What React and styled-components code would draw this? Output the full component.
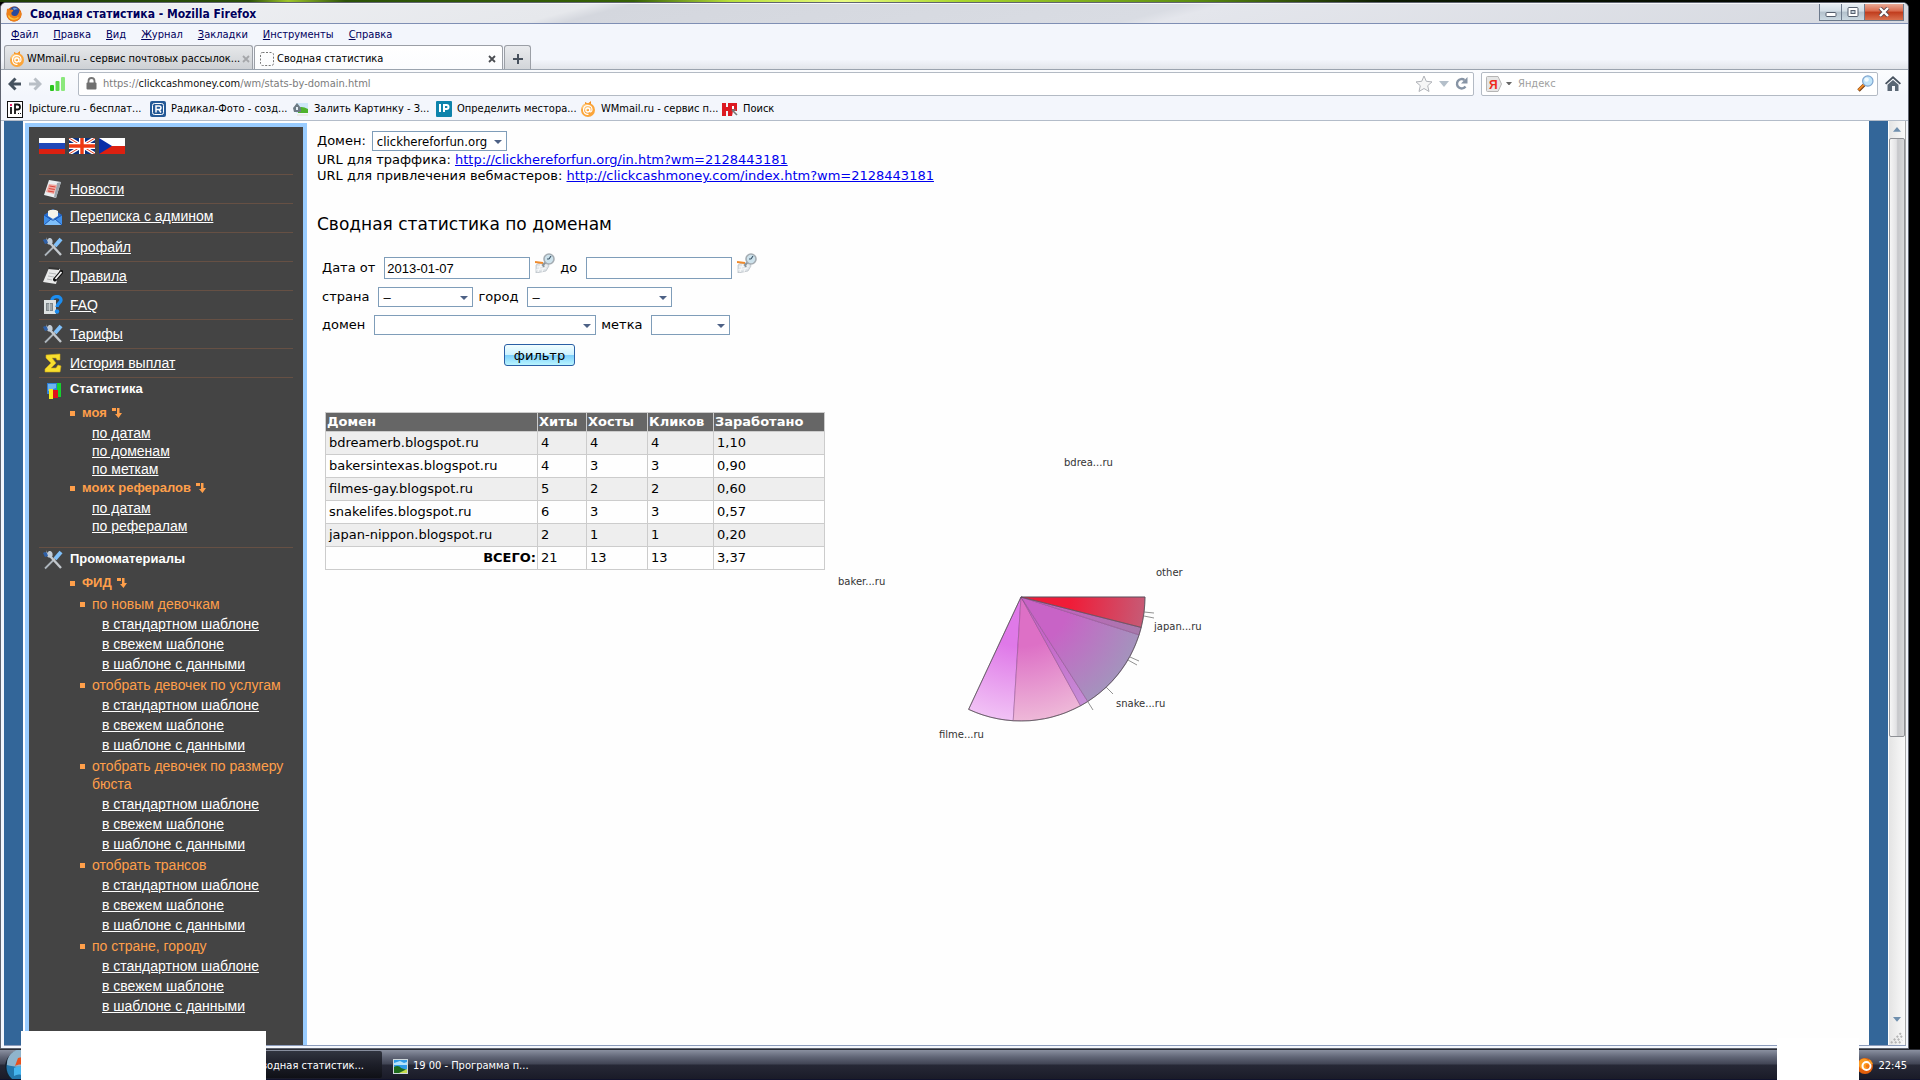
import { Fragment } from "react";
import styled, { createGlobalStyle, css } from "styled-components";

const GlobalStyle = createGlobalStyle`
    * {
        box-sizing: border-box;
    }
    body {
        margin: 0;
        background-color: black;
        font-family: "DejaVu Sans", Verdana, sans-serif;
        font-size: 13px;
    }
    input, select, button {
        margin: 0;
        font-family: inherit;
    }
    svg {
        display: block;
        flex: none;
    }
`;

const chromeFont = css`
    font-family: "DejaVu Sans Condensed", Tahoma, sans-serif;
    font-size: 11px;
    line-height: 16px;
`;

const Desktop = styled.div`
    min-height: 100vh;
    display: flex;
    flex-direction: column;
    position: relative;
    overflow: hidden;
`;

const Wallpaper = styled.div`
    height: 2px;
    background: linear-gradient(
        to right,
        #1d3c05 0%,
        #2c5207 13%,
        #9fc62a 15%,
        #2c5207 18%,
        #356004 33%,
        #b8df3a 38%,
        #e8fb80 44%,
        #a9d62d 50%,
        #5c8e10 62%,
        #0c1a02 72%,
        #000 100%
    );
`;

/* window */

const Window = styled.div`
    flex: 1;
    display: flex;
    flex-direction: column;
    margin-right: 11px;
    border: 1px solid #5f6470;
    border-radius: 6px 6px 0 0;
    background-color: #f3f6fc;
    overflow: hidden;
`;

const TitleBar = styled.header`
    height: 21px;
    display: flex;
    align-items: center;
    padding-left: 5px;
    border-bottom: 1px solid #7f8fb4;
    border-top: 1px solid #f6f7f9;
    background: linear-gradient(
        165deg,
        #f0f1f4 0%,
        #e6e8ec 30%,
        #d4d7de 32%,
        #d9dce3 60%,
        #e4e6ec 62%,
        #d6d9e0 100%
    );
`;

const WindowTitle = styled.h1`
    flex: 1;
    margin: 0 0 0 8px;
    padding-top: 1px;
    font-family: "DejaVu Sans Condensed", Tahoma, sans-serif;
    font-size: 12px;
    line-height: 18px;
    font-weight: bold;
    color: #00005c;
    text-shadow: 0 0 3px white;
`;

const WindowButtons = styled.div`
    display: flex;
    align-self: flex-start;
    margin-right: 4px;
`;

const WindowButton = styled.button`
    width: ${(props) => (props.$close ? "39px" : "23px")};
    height: 17px;
    padding: 0;
    display: flex;
    align-items: center;
    justify-content: center;
    border: 1px solid #6d7a8c;
    border-top: 0;
    border-left-width: ${(props) => (props.$first ? "1px" : "0")};
    background: ${(props) =>
        props.$close
            ? "linear-gradient(#e9a995, #d9694c 45%, #c03b1c 50%, #d9704e)"
            : "linear-gradient(#e6edf2, #d2dde5 45%, #b3c1cc 50%, #cbd9e2)"};
`;

const MenuBar = styled.nav`
    ${chromeFont}
    height: 21px;
    display: flex;
    align-items: center;
    gap: 15px;
    padding-left: 10px;
    a {
        color: #00005c;
        text-decoration: none;
    }
`;

const TabStrip = styled.div`
    ${chromeFont}
    height: 25px;
    display: flex;
    padding-left: 3px;
    border-bottom: 1px solid #9aa3ae;
    background: linear-gradient(#f3f6fc 60%, #e2e5ea);
`;

const Tab = styled.div`
    width: 249px;
    margin-right: 1px;
    padding: 2px 6px 0 4px;
    display: flex;
    align-items: center;
    gap: 2px;
    border: 1px solid #9b9fa6;
    border-bottom: 0;
    border-radius: 3px 3px 0 0;
    background: ${(props) =>
        props.$active
            ? "linear-gradient(#ffffff, #fbfcfe)"
            : "linear-gradient(#e6e8ea, #ced1d5)"};
    white-space: nowrap;
`;

const TabTitle = styled.span`
    flex: 1;
`;

const IconButton = styled.button`
    padding: 0;
    border: 0;
    background: none;
    display: flex;
    align-items: center;
    justify-content: center;
`;

const NewTab = styled(IconButton)`
    width: 27px;
    padding-top: 2px;
    border: 1px solid #9b9fa6;
    border-bottom: 0;
    border-radius: 3px 3px 0 0;
    background: linear-gradient(#e9ebee, #d2d5d9);
`;

const NavBar = styled.div`
    ${chromeFont}
    height: 26px;
    display: flex;
    align-items: center;
    padding: 1px 7px 0 7px;
    gap: 7px;
    background: linear-gradient(#fbfcfe, #f3f6fc);
`;

const NavButtons = styled.div`
    width: 63px;
    display: flex;
    align-items: center;
    gap: 8px;
`;

const Field = styled.div`
    height: 24px;
    display: flex;
    align-items: center;
    border: 1px solid #b3bac4;
    border-radius: 2px;
    background-color: white;
`;

const UrlField = styled(Field)`
    flex: 1;
    padding: 0 5px 0 7px;
    gap: 6px;
`;

const Url = styled.div`
    flex: 1;
    color: #7b7b7b;
    span {
        color: #111;
    }
`;

const SearchField = styled(Field)`
    width: 397px;
    padding: 0 3px 0 4px;
    gap: 4px;
    input {
        flex: 1;
        min-width: 0;
        border: 0;
        padding: 0 0 0 2px;
        outline: 0;
        background: none;
        ${chromeFont}
    }
    input::placeholder {
        color: #a0a0a0;
        opacity: 1;
    }
`;

const BookmarkBar = styled.nav`
    ${chromeFont}
    height: 25px;
    display: flex;
    align-items: center;
    padding: 2px 0 0 6px;
    border-bottom: 1px solid #b3bcc9;
    white-space: nowrap;
`;

const Bookmark = styled.a`
    width: ${(props) => props.$width || 143}px;
    display: flex;
    align-items: center;
    gap: 5px;
    color: black;
    text-decoration: none;
`;

/* page */

const Viewport = styled.div`
    flex: 1;
    display: flex;
    margin: 0 2px 2px 3px;
    border-bottom: 1px solid #8c9cbc;
    background-color: #fefefe;
`;

const SideBand = styled.div`
    width: 19px;
    background-color: #336699;
`;

const Sidebar = styled.aside`
    width: 282px;
    margin: 2px 0 0 2px;
    padding: 11px 10px 0 10px;
    border: 4px solid #99ccff;
    border-bottom: 0;
    background-color: #444;
    font-family: "Liberation Sans", Arial, sans-serif;
    font-size: 14px;
    line-height: 18px;
    color: white;
    a {
        color: white;
    }
`;

const Flags = styled.div`
    height: 36px;
    display: flex;
    gap: 4px;
`;

const NavList = styled.ul`
    list-style: none;
    margin: 0;
    padding: 0;
`;

const NavItem = styled.li`
    height: 29px;
    display: flex;
    align-items: ${(props) => (props.$raised ? "flex-start" : "center")};
    gap: 7px;
    padding: ${(props) => (props.$raised ? "3px" : "0")} 0 0 4px;
    border-top: 1px solid #665044;
`;

const Section = styled.section`
    padding: 2px 0 11px;
    border-top: 1px solid #665044;
`;

const SectionHead = styled.h2`
    height: 24px;
    display: flex;
    gap: 7px;
    margin: 0;
    padding-left: 4px;
    font-size: 13px;
    line-height: 18px;
`;

const Branch = styled.div`
    margin-left: 31px;
`;

const bullet = css`
    display: flex;
    gap: 7px;
    margin: 0;
    color: #ff9f4a;
    &::before {
        content: "";
        flex: none;
        width: 5px;
        height: 5px;
        margin-top: 7px;
        background-color: #ff9f4a;
    }
`;

const BranchTitle = styled.h3`
    ${bullet}
    height: 19px;
    font-size: 13px;
    line-height: 18px;
    align-items: flex-start;
    svg {
        margin: 4px 0 0 -2px;
    }
`;

const LinkList = styled.ul`
    list-style: none;
    margin: 0;
    padding: 1px 0 1px 22px;
`;

const Template = styled.div`
    margin: 2px -6px 0 10px;
`;

const TemplateTitle = styled.p`
    ${bullet}
`;

const TemplateLinks = styled.ul`
    list-style: none;
    margin: 0;
    padding: 1px 0 0 22px;
    line-height: 20px;
`;

const Main = styled.main`
    flex: 1;
    padding: 10px 10px 0;
    line-height: 16px;
    a {
        color: #0000ee;
    }
`;

const DomainRow = styled.div`
    height: 21px;
    display: flex;
    align-items: flex-start;
    gap: 6px;
    label {
        line-height: 20px;
    }
`;

const UrlLine = styled.p`
    margin: 0;
`;

const PageTitle = styled.h2`
    margin: 28px 0 21px;
    font-size: 17px;
    line-height: 24px;
    font-weight: normal;
`;

const Filter = styled.form`
    margin-left: 5px;
    display: flex;
    flex-direction: column;
    align-items: flex-start;
    gap: 8px;
`;

const FilterRow = styled.div`
    display: flex;
    align-items: center;
    gap: 5px;
    label {
        margin-right: 4px;
    }
`;

const control = css`
    border: 1px solid #7f9db9;
    border-radius: 0;
    background-color: white;
    color: black;
    font-family: "Liberation Sans", Arial, sans-serif;
    font-size: 13px;
`;

const DateInput = styled.input`
    ${control}
    width: 146px;
    height: 22px;
    padding: 0 2px;
`;

const CalendarButton = styled(IconButton)`
    align-self: flex-start;
    margin-top: -4px;
`;

const SelectBox = styled.span`
    position: relative;
    display: inline-block;
    width: ${(props) => props.$width}px;
    height: 20px;
    select {
        ${control}
        ${(props) =>
            props.$wide &&
            css`
                font-family: "DejaVu Sans Condensed", Tahoma, sans-serif;
            `}
        appearance: none;
        display: block;
        width: 100%;
        height: 100%;
        padding: 0 4px;
    }
    &::after {
        content: "";
        position: absolute;
        right: 5px;
        top: 9px;
        border: 4px solid transparent;
        border-top-color: #4d6185;
        border-bottom: 0;
        pointer-events: none;
    }
`;

const FilterButton = styled.button`
    width: 71px;
    height: 22px;
    margin: 1px 0 0 182px;
    padding: 0;
    border: 1px solid #2a5fa5;
    border-radius: 3px;
    background: linear-gradient(#f2fdff, #cdf3ff 48%, #7fd0fb 52%, #b9f5ff);
    color: black;
    font-size: 13px;
`;

const Report = styled.div`
    display: flex;
    align-items: flex-start;
    gap: 5px;
    margin: 46px 0 0 8px;
`;

const StatsTable = styled.table`
    width: 500px;
    table-layout: fixed;
    border-collapse: collapse;
    th,
    td {
        border: 1px solid #ccc;
        text-align: left;
    }
    th {
        height: 19px;
        padding: 0 1px;
        background-color: #666;
        color: white;
        line-height: 16px;
    }
    td {
        height: 23px;
        padding: 0 3px;
    }
    tbody tr:nth-child(odd) td {
        background-color: #eee;
    }
    tfoot th {
        height: 23px;
        background: none;
        color: black;
        text-align: right;
    }
`;

const PieLabel = styled.text`
    font-family: "DejaVu Sans", Verdana, sans-serif;
    font-size: 10px;
    fill: #333;
`;

const ScrollBar = styled.div`
    width: 17px;
    margin-left: 1px;
    display: flex;
    flex-direction: column;
    background: linear-gradient(to right, #e4e4e4, #fafafa);
    border-right: 1px solid #aaa;
`;

const ScrollButton = styled(IconButton)`
    height: 17px;
`;

const ScrollThumb = styled.div`
    flex: 600;
    border: 1px solid #8e9095;
    border-radius: 2px;
    background: linear-gradient(to right, #f6f6f6, #e2e2e4 45%, #c6c7ca 55%, #d8d8da);
`;

const ScrollTrack = styled.div`
    flex: 276;
`;

/* taskbar */

const TaskBar = styled.footer`
    ${chromeFont}
    height: 31px;
    display: flex;
    align-items: center;
    border-top: 1px solid #2b2d35;
    border-bottom: 1px solid #10122c;
    background: linear-gradient(#8a90a0 0%, #5f6475 25%, #414555 48%, #262836 52%, #1a1b28 100%);
    color: white;
`;

const Task = styled.button`
    ${chromeFont}
    height: 27px;
    padding: 3px 0 0 11px;
    display: flex;
    align-items: center;
    gap: 5px;
    border: 0;
    border-radius: 2px;
    background: ${(props) =>
        props.$active ? "linear-gradient(#31343f, #1d1f29 48%, #0f1016)" : "none"};
    color: white;
    ${(props) =>
        props.$active &&
        css`
            width: 156px;
            padding: 3px 18px 0 0;
            margin-left: 190px;
            justify-content: flex-end;
        `}
`;

const Tray = styled.div`
    flex: 1;
    display: flex;
    align-items: center;
    justify-content: flex-end;
    gap: 5px;
    padding: 2px 13px 0 0;
`;

const Patch = styled.div`
    position: absolute;
    bottom: 0;
    background-color: white;
    ${(props) =>
        props.$left
            ? "left: 21px; width: 245px; height: 49px;"
            : "right: 61px; width: 82px; height: 42px;"}
`;

/* icons */

const FirefoxIcon = () => (
    <svg width="16" height="16" viewBox="0 0 16 16">
        <circle cx="8" cy="8" r="7.6" fill="#d9640f" />
        <circle cx="8.6" cy="5.6" r="5" fill="#2a4a9c" />
        <path d="M1 3c1.200-.6 2.200 0 3 1 1.300-.8 2.800-.4 3.400.8L5.500 6.600c-.6 2 .8 3.600 3.400 3.400 2.400-.2 3.800-2 4.600-5.600l1.800 2.600c.6 4-2.400 8.400-7.300 8.600C3 15.500-.2 10.500 1 3z" fill="#ee8118" />
        <path d="M2.500 9.500c1.500 4 6.500 4.800 10 2" stroke="#fcc63c" strokeWidth="1.400" fill="none" />
        <path d="M7 2c2-.8 4 0 5 1.500-1.500-.4-3 .2-4 .8z" fill="#6fa0dc" />
    </svg>
);

const MailAtIcon = () => (
    <svg width="16" height="16" viewBox="0 0 16 16">
        <path d="M5 1l3 1.500L11 0v4H5z" fill="#f08b1e" />
        <circle cx="8" cy="9" r="7" fill="#fba53a" />
        <ellipse cx="6" cy="6" rx="4" ry="3" fill="#ffd28c" opacity="0.7" />
        <circle cx="7.800" cy="9" r="2" fill="none" stroke="white" strokeWidth="1.300" />
        <path d="M9.800 7v3c.2 1.400 2.200 1 2.200-1.200 0-3-2-4.300-4.200-4.300C5 4.500 3.500 6.600 3.500 9c0 3 2.300 4.700 5 4.300" fill="none" stroke="white" strokeWidth="1.200" />
    </svg>
);

const BlankPageIcon = () => (
    <svg width="16" height="14" viewBox="0 0 16 14">
        <rect x="1.500" y="0.500" width="13" height="13" rx="2" fill="none" stroke="#777" strokeDasharray="2 1.500" />
    </svg>
);

const CloseIcon = ({ color }) => (
    <svg width="8" height="8" viewBox="0 0 8 8">
        <path d="M1 1l6 6M7 1L1 7" stroke={color} strokeWidth="1.800" />
    </svg>
);

const PlusIcon = () => (
    <svg width="10" height="10" viewBox="0 0 10 10">
        <path d="M5 0v10M0 5h10" stroke="#46505c" strokeWidth="2" />
    </svg>
);

const ArrowIcon = ({ color, flip }) => (
    <svg width="13" height="14" viewBox="0 0 13 14">
        <path
            d="M7.500 1.500L2 7l5.500 5.500M2.500 7H13"
            transform={flip ? "rotate(180 6.5 7)" : undefined}
            fill="none"
            stroke={color}
            strokeWidth="3"
        />
    </svg>
);

const SignalIcon = () => (
    <svg width="16" height="16" viewBox="0 0 16 16">
        <rect x="0" y="9" width="4" height="6" rx="1" fill="#29c41c" />
        <rect x="5.500" y="5" width="4" height="10" rx="1" fill="#5cd94c" />
        <rect x="11" y="1" width="4" height="14" rx="1" fill="#8be87c" />
    </svg>
);

const LockIcon = () => (
    <svg width="11" height="13" viewBox="0 0 11 13">
        <path d="M2.500 6V4a3 3 0 0 1 6 0v2" fill="none" stroke="#777" strokeWidth="1.800" />
        <rect x="0.500" y="5.500" width="10" height="7" rx="1" fill="#707070" />
    </svg>
);

const StarIcon = () => (
    <svg width="18" height="18" viewBox="0 0 18 18">
        <path d="M9 1l2.300 5.300 5.700.6-4.300 3.800 1.300 5.800L9 13.500l-5 3 1.300-5.800L1 6.900l5.700-.6z" fill="#f6f6f6" stroke="#b0b3b8" />
    </svg>
);

const DropIcon = ({ width, color, up }) => (
    <svg width={width} height={width * 0.6} viewBox="0 0 10 6">
        <path d={up ? "M0 6h10L5 0z" : "M0 0h10L5 6z"} fill={color} />
    </svg>
);

const ReloadIcon = () => (
    <svg width="13" height="13" viewBox="0 0 13 13">
        <path d="M10.500 9.500A4.700 4.700 0 1 1 9.500 3" fill="none" stroke="#8794a5" strokeWidth="2.400" />
        <path d="M12.500 0v6.500H6z" fill="#8794a5" />
    </svg>
);

const YandexIcon = () => (
    <svg width="16" height="16" viewBox="0 0 16 16">
        <path d="M1.500.5H12L15.500 8 12 15.500H1.500a1 1 0 0 1-1-1v-13a1 1 0 0 1 1-1z" fill="#e6e6e6" stroke="#b5b5b5" />
        <text x="3" y="12.500" fontFamily="Liberation Sans" fontSize="12" fontWeight="bold" fill="#ee2a1c">Я</text>
    </svg>
);

const SearchIcon = () => (
    <svg width="17" height="17" viewBox="0 0 17 17">
        <path d="M1.500 15.500l6-6" stroke="#6e3a14" strokeWidth="3.400" />
        <path d="M1.500 15l6-6" stroke="#f08a24" strokeWidth="2" />
        <circle cx="10.800" cy="6" r="5.200" fill="#bfe4fa" stroke="#7fa5cf" strokeWidth="1.200" />
        <circle cx="9.600" cy="4.600" r="2.200" fill="white" opacity="0.8" />
    </svg>
);

const HomeIcon = () => (
    <svg width="16" height="15" viewBox="0 0 16 15">
        <path d="M8 0l8 7.200-1.200 1.300L8 2.600 1.200 8.500 0 7.200z" fill="#47525f" />
        <path d="M8 4l5.500 4.800V15H10v-5H7v5H2.500V8.800z" fill="#5a6775" />
    </svg>
);

const IpictureIcon = () => (
    <svg width="17" height="17" viewBox="0 0 17 17">
        <rect x="0.500" y="0.500" width="15" height="16" fill="white" stroke="#111" />
        <rect x="3" y="3" width="2" height="2" fill="#e8246c" />
        <path d="M4 6v7M8 13V3.500h2.500a2.200 2.200 0 0 1 0 5H8" fill="none" stroke="#111" strokeWidth="1.800" />
        <path d="M11 12.500h3" stroke="#111" strokeDasharray="1 1" />
    </svg>
);

const RadikalIcon = () => (
    <svg width="16" height="16" viewBox="0 0 16 16">
        <rect width="16" height="16" rx="2" fill="#255a97" />
        <rect x="2.500" y="2.500" width="11" height="11" rx="2" fill="none" stroke="white" />
        <path d="M6 11.500V5h3.200a1.700 1.700 0 0 1 0 3.600H6m3 0l2 2.900" fill="none" stroke="white" strokeWidth="1.500" />
    </svg>
);

const PictureIcon = () => (
    <svg width="16" height="16" viewBox="0 0 16 16">
        <rect x="3" y="2" width="12" height="10" fill="#cfe7f8" />
        <path d="M5 7c3-2 6-1 10 1v4H5z" fill="#4fb32c" />
        <path d="M0 7l4-5 4 5v4H1z" fill="#6d7b84" />
        <rect x="3" y="6" width="2" height="3" fill="#e3eef5" />
        <path d="M4 14h11" stroke="#e3e0d6" />
    </svg>
);

const IpIcon = () => (
    <svg width="16" height="16" viewBox="0 0 16 16">
        <rect width="16" height="16" rx="1" fill="#0d83ab" />
        <path d="M4 3v8M8 11V4h2.500a2 2 0 0 1 0 4H8" fill="none" stroke="white" strokeWidth="2" />
    </svg>
);

const PoiskIcon = () => (
    <svg width="16" height="13" viewBox="0 0 16 13">
        <path d="M0 0h4v4h2V0h9v8h-4l-1 5H6V8H4v5H0z" fill="#dc1a22" />
        <path d="M10 3h2v3h-2z" fill="white" />
        <path d="M10 7l5 5M10 7h4" stroke="#777" strokeWidth="1.600" />
    </svg>
);

const RussiaFlag = () => (
    <svg width="26" height="16" viewBox="0 0 26 16">
        <rect width="26" height="16" fill="white" />
        <rect y="5" width="26" height="6" fill="#1f47b8" />
        <rect y="11" width="26" height="5" fill="#dc2010" />
    </svg>
);

const BritainFlag = () => (
    <svg width="26" height="16" viewBox="0 0 26 16">
        <rect width="26" height="16" fill="#0b3180" />
        <path d="M0 0l26 16M26 0L0 16" stroke="white" strokeWidth="3.600" />
        <path d="M0 0l26 16M26 0L0 16" stroke="#e04020" strokeWidth="1" />
        <path d="M13 0v16M0 8h26" stroke="white" strokeWidth="6" />
        <path d="M13 0v16M0 8h26" stroke="#ee3a12" strokeWidth="3.400" />
    </svg>
);

const CzechFlag = () => (
    <svg width="26" height="16" viewBox="0 0 26 16">
        <rect width="26" height="8" fill="white" />
        <rect y="8" width="26" height="8" fill="#dc2010" />
        <path d="M0 0l13 8-13 8z" fill="#0a2fa8" />
    </svg>
);

const NewsIcon = () => (
    <svg width="20" height="20" viewBox="0 0 20 20">
        <path d="M6 1l12 2-5 16L1 16z" fill="#e9eef1" />
        <path d="M14 4l4-1-5 16-2-1z" fill="#9aa4ac" />
        <path d="M6 5l8 1-3 9-8-2z" fill="#f0a8a0" />
        <path d="M6.500 7l6 1M5.800 9.500l6 1M5 12l6 1" stroke="#d8453c" />
    </svg>
);

const LetterIcon = () => (
    <svg width="20" height="20" viewBox="0 0 20 20">
        <path d="M1 8l9-6 9 6v10H1z" fill="#2a6fd0" />
        <path d="M5 4a6 3 0 0 1 10 0v5l-5 3-5-3z" fill="#f4f4ea" />
        <path d="M1 8l9 6 9-6v10H1z" fill="#3f8fea" />
        <path d="M1 18l7-6h4l7 6z" fill="#7fc0fa" />
        <path d="M1 18l7-6M19 18l-7-6M1 8l8 5h2l8-5" fill="none" stroke="#1c56b0" />
    </svg>
);

const ToolsIcon = () => (
    <svg width="20" height="20" viewBox="0 0 20 20">
        <path d="M18 2l-6 7" stroke="#7fc0fa" strokeWidth="4" />
        <path d="M12 8.500l-10 10" stroke="#aeb6bd" strokeWidth="1.800" />
        <path d="M7 6l11 12" stroke="#c3c8cd" strokeWidth="2.400" />
        <path d="M3 0l1 3 2-2c3 0 4 2 3.500 5-2 2.500-5 2-6-1z" fill="#c2cdd8" />
        <path d="M0 3l2 4 3-1-1-3-2-1z" fill="#2e5fa6" />
    </svg>
);

const RulesIcon = () => (
    <svg width="20" height="20" viewBox="0 0 20 20">
        <path d="M6 2l11 1-4 15-13-2z" fill="#e9eaea" />
        <path d="M6 1l10 1v2L5 3z" fill="#333" />
        <path d="M6 7l7 1M5 10l6 1M4 13l5 1" stroke="#b5b8ba" />
        <path d="M18.500 6l-6.500 7.500" stroke="#111" strokeWidth="4" strokeLinecap="round" />
        <path d="M18.500 6l-6 7" stroke="#f3f3f3" strokeWidth="1.800" />
    </svg>
);

const FaqIcon = () => (
    <svg width="20" height="20" viewBox="0 0 20 20">
        <rect x="1" y="5" width="12" height="14" fill="#dde2e2" />
        <rect x="3" y="8" width="7" height="8" fill="#7d868a" />
        <path d="M4 10h5M4 12h5M4 14h5M6.500 8v8" stroke="#dde2e2" strokeWidth="0.700" />
        <path d="M9 5c0-4 9-5 9 0 0 3-4 3-4 7" fill="none" stroke="#1c8df0" strokeWidth="3.400" />
        <circle cx="14" cy="16.500" r="2.200" fill="#1c8df0" />
    </svg>
);

const SumIcon = () => (
    <svg width="20" height="20" viewBox="0 0 20 20">
        <path d="M3 2l14-1v6h-3l-1-2H9l4 5-5 5h5l2-3 3 1-1 6H2v-3l6-6-5-5z" fill="#f7df2e" stroke="#d0aa18" strokeWidth="0.600" />
    </svg>
);

const ChartIcon = () => (
    <svg width="20" height="20" viewBox="0 0 20 20">
        <rect x="4" y="3" width="10" height="11" fill="#2e7fd6" />
        <path d="M5 4h8v4L5 11z" fill="#6db4f0" />
        <path d="M6 9h4v10H6z" fill="#f7ea1c" />
        <path d="M10 10h5v8h-5z" fill="#e0101c" />
        <path d="M14 3h4v14h-3v-7h-1z" fill="#18d030" />
    </svg>
);

const TurnDownIcon = () => (
    <svg width="10" height="10" viewBox="0 0 10 10">
        <path d="M0 0h4v3H0zM5 0h2.500v5H10L6.500 10 3 6h2z" fill="#ff9f4a" />
    </svg>
);

const CalendarIcon = () => (
    <svg width="20" height="20" viewBox="0 0 20 20">
        <path d="M1 12l3-2h9l1 3-3 5-10 2z" fill="#dfe4e8" stroke="#aab2b8" strokeWidth="0.600" />
        <path d="M2 14l10-1M1 17l10-2M6 11l-3 8M10 11l-3 8" stroke="#f7f9fa" />
        <path d="M0 9l8 1" stroke="#f08a2c" strokeWidth="2" />
        <path d="M9 14l-1-2 3-3" fill="none" stroke="#8a949b" strokeWidth="2" />
        <circle cx="14" cy="6" r="5" fill="#cde2ec" stroke="#a5adb3" strokeWidth="1.600" />
        <path d="M14 6l2-3M14 6h-2" stroke="#3d5668" strokeWidth="1.200" />
    </svg>
);

const StartOrb = () => (
    <svg width="36" height="29" viewBox="0 0 36 29">
        <circle cx="22" cy="17" r="17" fill="#16202e" />
        <circle cx="22" cy="17" r="15.500" fill="#2377ad" />
        <path d="M7 15a15 15 0 0 1 30-2c-8 4-20 5-30 2z" fill="#8fb4cc" />
        <path d="M15 16l3-8c3-1 5-1 7 0v8c-4-2-6-2-10 0z" fill="#e8501c" />
        <path d="M14 18c4-2 6-2 10 0v8c-4-2-7-2-10 0z" fill="#45b4ee" />
    </svg>
);

const LandscapeIcon = () => (
    <svg width="15" height="15" viewBox="0 0 15 15">
        <rect width="15" height="15" fill="#cfd8dc" />
        <rect x="1" y="1" width="13" height="13" fill="#2f9be8" />
        <path d="M1 4l6-2 4 2 3-1v3H1z" fill="#b5e2fb" />
        <path d="M1 8c3-2 6-1 7 1l6 2v3H1z" fill="#1d6b1c" />
        <path d="M6 14l8-4v4z" fill="#c7dd4e" />
    </svg>
);

const TrayIcon = () => (
    <svg width="16" height="16" viewBox="0 0 16 16">
        <circle cx="8" cy="8" r="8" fill="#e2600c" />
        <circle cx="7" cy="6" r="5.500" fill="#fb9c22" />
        <circle cx="9.500" cy="8" r="4" fill="none" stroke="white" strokeWidth="2" />
        <circle cx="10.500" cy="8" r="1.800" fill="#f3740f" />
        <path d="M12 2l3 4" stroke="#fb9c22" strokeWidth="2" />
    </svg>
);

const GripIcon = () => (
    <svg width="14" height="17" viewBox="0 0 14 17">
        <path d="M2 15L13 4M6 15l7-7M10 15l3-3" stroke="#b5b5b5" strokeWidth="2" strokeDasharray="2 2" />
    </svg>
);

/* data */

const menus = ["Файл", "Правка", "Вид", "Журнал", "Закладки", "Инструменты", "Справка"];

const bookmarks = [
    { label: "Ipicture.ru - бесплат...", Icon: IpictureIcon },
    { label: "Радикал-Фото - созд...", Icon: RadikalIcon },
    { label: "Залить Картинку - З...", Icon: PictureIcon },
    { label: "Определить местора...", Icon: IpIcon, width: 144 },
    { label: "WMmail.ru - сервис п...", Icon: MailAtIcon, width: 142 },
    { label: "Поиск", Icon: PoiskIcon },
];

const pages = [
    { label: "Новости", Icon: NewsIcon },
    { label: "Переписка с админом", Icon: LetterIcon, raised: true },
    { label: "Профайл", Icon: ToolsIcon },
    { label: "Правила", Icon: RulesIcon },
    { label: "FAQ", Icon: FaqIcon },
    { label: "Тарифы", Icon: ToolsIcon },
    { label: "История выплат", Icon: SumIcon },
];

const statBranches = [
    { title: "моя", links: ["по датам", "по доменам", "по меткам"] },
    { title: "моих рефералов", links: ["по датам", "по рефералам"] },
];

const feeds = [
    "по новым девочкам",
    "отобрать девочек по услугам",
    "отобрать девочек по размеру бюста",
    "отобрать трансов",
    "по стране, городу",
];

const templates = ["в стандартном шаблоне", "в свежем шаблоне", "в шаблоне с данными"];

const rows = [
    ["bdreamerb.blogspot.ru", 4, 4, 4, "1,10"],
    ["bakersintexas.blogspot.ru", 4, 3, 3, "0,90"],
    ["filmes-gay.blogspot.ru", 5, 2, 2, "0,60"],
    ["snakelifes.blogspot.ru", 6, 3, 3, "0,57"],
    ["japan-nippon.blogspot.ru", 2, 1, 1, "0,20"],
];

const slices = [
    { from: 93.6, to: 115, inner: "#df79e8", outer: "#f1c2f5" },
    { from: 61.3, to: 93.6, inner: "#dd70c6", outer: "#eeb8d8" },
    { from: 57.4, to: 61.3, inner: "#c666c8", outer: "#c68fd8" },
    { from: 17.8, to: 57.4, inner: "#c863c6", outer: "#a493bd" },
    { from: 14.2, to: 17.8, inner: "#c065bc", outer: "#a67aab" },
    { from: 0, to: 14.2, inner: "#f01c38", outer: "#c75a75" },
];

const pieLabels = [
    { x: 234, y: 54, text: "bdrea...ru" },
    { x: 326, y: 164, text: "other" },
    { x: 8, y: 173, text: "baker...ru" },
    { x: 324, y: 218, text: "japan...ru" },
    { x: 286, y: 295, text: "snake...ru" },
    { x: 109, y: 326, text: "filme...ru" },
];

const CX = 191;
const CY = 185;
const R = 124;

const point = (angle) => {
    const rad = (angle * Math.PI) / 180;
    return `${CX + R * Math.cos(rad)} ${CY + R * Math.sin(rad)}`;
};

function Pie() {
    return (
        <svg width="400" height="350" viewBox="0 0 400 350" role="img" aria-label="Заработано по доменам">
            <defs>
                {slices.map(({ from, inner, outer }) => (
                    <radialGradient
                        key={from}
                        id={`slice-${Math.round(from)}`}
                        gradientUnits="userSpaceOnUse"
                        cx={CX}
                        cy={CY}
                        r={R}
                    >
                        <stop offset="0.4" stopColor={inner} />
                        <stop offset="1" stopColor={outer} />
                    </radialGradient>
                ))}
            </defs>
            {slices.map(({ from, to }) => (
                <path
                    key={from}
                    d={`M${CX} ${CY}L${point(from)}A${R} ${R} 0 0 1 ${point(to)}z`}
                    fill={`url(#slice-${Math.round(from)})`}
                    stroke="#7a3f7a"
                    strokeOpacity="0.4"
                />
            ))}
            <path
                d={`M${CX} ${CY}L${point(0)}A${R} ${R} 0 0 1 ${point(115)}z`}
                fill="none"
                stroke="#555"
                strokeOpacity="0.8"
            />
            <path d={`M${CX} ${CY}L${point(14.2)}`} stroke="#555" strokeOpacity="0.7" />
            <path
                d="M314 200l10 1M314 204l10 2M300 245l9 4M298 248l9 5M276 275l7 7M258 290l5 8"
                fill="none"
                stroke="#777"
                strokeOpacity="0.8"
            />
            {pieLabels.map(({ x, y, text }) => (
                <PieLabel key={text} x={x} y={y}>
                    {text}
                </PieLabel>
            ))}
        </svg>
    );
}

function Select({ id, width, wide, value }) {
    return (
        <SelectBox $width={width} $wide={wide}>
            <select id={id}>
                <option>{value}</option>
            </select>
        </SelectBox>
    );
}

function Chrome() {
    return (
        <>
            <TitleBar>
                <FirefoxIcon />
                <WindowTitle>Сводная статистика - Mozilla Firefox</WindowTitle>
                <WindowButtons>
                    <WindowButton $first aria-label="Свернуть">
                        <svg width="12" height="10" viewBox="0 0 12 10">
                            <rect x="1" y="5.500" width="10" height="4" rx="1" fill="white" stroke="#555f6e" />
                        </svg>
                    </WindowButton>
                    <WindowButton aria-label="Развернуть">
                        <svg width="12" height="10" viewBox="0 0 12 10">
                            <rect x="1" y="0.500" width="10" height="9" rx="1" fill="white" stroke="#555f6e" />
                            <rect x="4" y="3.500" width="4" height="3" fill="#c5d1da" stroke="#555f6e" />
                        </svg>
                    </WindowButton>
                    <WindowButton $close aria-label="Закрыть">
                        <svg width="12" height="10" viewBox="0 0 12 10">
                            <path d="M2 1l8 8M10 1L2 9" stroke="#58454c" strokeWidth="4" />
                            <path d="M2 1l8 8M10 1L2 9" stroke="white" strokeWidth="2.400" />
                        </svg>
                    </WindowButton>
                </WindowButtons>
            </TitleBar>
            <MenuBar>
                {menus.map((menu) => (
                    <a key={menu} href="#menu">
                        <u>{menu[0]}</u>
                        {menu.slice(1)}
                    </a>
                ))}
            </MenuBar>
            <TabStrip>
                <Tab>
                    <MailAtIcon />
                    <TabTitle>WMmail.ru - сервис почтовых рассылок...</TabTitle>
                    <IconButton aria-label="Закрыть вкладку">
                        <CloseIcon color="#a5a7aa" />
                    </IconButton>
                </Tab>
                <Tab $active>
                    <BlankPageIcon />
                    <TabTitle>Сводная статистика</TabTitle>
                    <IconButton aria-label="Закрыть вкладку">
                        <CloseIcon color="#4a4d52" />
                    </IconButton>
                </Tab>
                <NewTab aria-label="Новая вкладка">
                    <PlusIcon />
                </NewTab>
            </TabStrip>
            <NavBar>
                <NavButtons>
                    <IconButton aria-label="Назад">
                        <ArrowIcon color="#46525f" />
                    </IconButton>
                    <IconButton aria-label="Вперёд">
                        <ArrowIcon color="#b9bfc6" flip />
                    </IconButton>
                    <SignalIcon />
                </NavButtons>
                <UrlField>
                    <LockIcon />
                    <Url>
                        https://<span>clickcashmoney.com</span>/wm/stats-by-domain.html
                    </Url>
                    <StarIcon />
                    <DropIcon width={10} color="#b4bfca" />
                    <ReloadIcon />
                </UrlField>
                <SearchField>
                    <YandexIcon />
                    <DropIcon width={6} color="#666" />
                    <input type="text" placeholder="Яндекс" aria-label="Поиск" />
                    <SearchIcon />
                </SearchField>
                <HomeIcon />
            </NavBar>
            <BookmarkBar>
                {bookmarks.map(({ label, Icon, width }) => (
                    <Bookmark key={label} href="#bookmark" $width={width}>
                        <Icon />
                        {label}
                    </Bookmark>
                ))}
            </BookmarkBar>
        </>
    );
}

function Navigation() {
    return (
        <Sidebar>
            <Flags>
                <RussiaFlag />
                <BritainFlag />
                <CzechFlag />
            </Flags>
            <NavList>
                {pages.map(({ label, Icon, raised }) => (
                    <NavItem key={label} $raised={raised}>
                        <Icon />
                        <a href="#page">{label}</a>
                    </NavItem>
                ))}
            </NavList>
            <Section>
                <SectionHead>
                    <ChartIcon />
                    Статистика
                </SectionHead>
                {statBranches.map(({ title, links }) => (
                    <Branch key={title}>
                        <BranchTitle>
                            {title}
                            <TurnDownIcon />
                        </BranchTitle>
                        <LinkList>
                            {links.map((link) => (
                                <li key={link}>
                                    <a href="#stats">{link}</a>
                                </li>
                            ))}
                        </LinkList>
                    </Branch>
                ))}
            </Section>
            <Section>
                <SectionHead>
                    <ToolsIcon />
                    Промоматериалы
                </SectionHead>
                <Branch>
                    <BranchTitle>
                        ФИД
                        <TurnDownIcon />
                    </BranchTitle>
                    {feeds.map((feed) => (
                        <Template key={feed}>
                            <TemplateTitle>{feed}</TemplateTitle>
                            <TemplateLinks>
                                {templates.map((template) => (
                                    <li key={template}>
                                        <a href="#template">{template}</a>
                                    </li>
                                ))}
                            </TemplateLinks>
                        </Template>
                    ))}
                </Branch>
            </Section>
        </Sidebar>
    );
}

function Stats() {
    return (
        <StatsTable>
            <colgroup>
                <col width="212" />
                <col width="49" />
                <col width="61" />
                <col width="66" />
                <col />
            </colgroup>
            <thead>
                <tr>
                    {["Домен", "Хиты", "Хосты", "Кликов", "Заработано"].map((title) => (
                        <th key={title} scope="col">
                            {title}
                        </th>
                    ))}
                </tr>
            </thead>
            <tbody>
                {rows.map((row) => (
                    <tr key={row[0]}>
                        {row.map((cell, index) => (
                            <td key={index}>{cell}</td>
                        ))}
                    </tr>
                ))}
            </tbody>
            <tfoot>
                <tr>
                    <th scope="row">ВСЕГО:</th>
                    <td>21</td>
                    <td>13</td>
                    <td>13</td>
                    <td>3,37</td>
                </tr>
            </tfoot>
        </StatsTable>
    );
}

function Content() {
    return (
        <Main>
            <DomainRow>
                <label htmlFor="site">Домен:</label>
                <Select id="site" width={135} wide value="clickhereforfun.org" />
            </DomainRow>
            <UrlLine>
                URL для траффика:{" "}
                <a href="#traffic">http://clickhereforfun.org/in.htm?wm=2128443181</a>
            </UrlLine>
            <UrlLine>
                URL для привлечения вебмастеров:{" "}
                <a href="#webmasters">http://clickcashmoney.com/index.htm?wm=2128443181</a>
            </UrlLine>
            <PageTitle>Сводная статистика по доменам</PageTitle>
            <Filter onSubmit={(event) => event.preventDefault()}>
                <FilterRow>
                    {[
                        { id: "from", label: "Дата от", value: "2013-01-07" },
                        { id: "to", label: "до", value: "" },
                    ].map(({ id, label, value }) => (
                        <Fragment key={id}>
                            <label htmlFor={id}>{label}</label>
                            <DateInput id={id} type="text" defaultValue={value} />
                            <CalendarButton type="button" aria-label="Календарь">
                                <CalendarIcon />
                            </CalendarButton>
                        </Fragment>
                    ))}
                </FilterRow>
                <FilterRow>
                    <label htmlFor="country">страна</label>
                    <Select id="country" width={95} value="–" />
                    <label htmlFor="city">город</label>
                    <Select id="city" width={145} value="–" />
                </FilterRow>
                <FilterRow>
                    <label htmlFor="domain">домен</label>
                    <Select id="domain" width={222} value="" />
                    <label htmlFor="mark">метка</label>
                    <Select id="mark" width={79} value="" />
                </FilterRow>
                <FilterButton type="submit">фильтр</FilterButton>
            </Filter>
            <Report>
                <Stats />
                <Pie />
            </Report>
        </Main>
    );
}

function App() {
    return (
        <Desktop>
            <GlobalStyle />
            <Wallpaper />
            <Window>
                <Chrome />
                <Viewport>
                    <SideBand />
                    <Navigation />
                    <Content />
                    <SideBand />
                    <ScrollBar>
                        <ScrollButton aria-label="Вверх">
                            <DropIcon width={8} color="#6f8fae" up />
                        </ScrollButton>
                        <ScrollThumb />
                        <ScrollTrack />
                        <ScrollButton aria-label="Вниз">
                            <DropIcon width={8} color="#6f8fae" />
                        </ScrollButton>
                        <GripIcon />
                    </ScrollBar>
                </Viewport>
            </Window>
            <TaskBar>
                <StartOrb />
                <Task $active>Сводная статистик...</Task>
                <Task>
                    <LandscapeIcon />
                    19 00 - Программа п...
                </Task>
                <Tray>
                    <TrayIcon />
                    <time>22:45</time>
                </Tray>
            </TaskBar>
            <Patch $left />
            <Patch />
        </Desktop>
    );
}

export default App;
